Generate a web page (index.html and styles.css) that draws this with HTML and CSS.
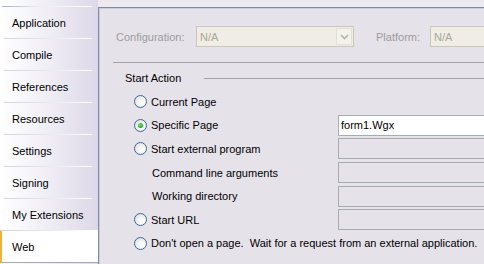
FILE: index.html
```html
<!DOCTYPE html>
<html lang="en">
<head>
  <meta charset="UTF-8" />
  <title>Project Properties - Web</title>
  <link rel="stylesheet" href="styles.css">
</head>
<body>
  <div class="window">
    <ul class="tabs">
      <li class="tab">Application</li>
      <li class="tab">Compile</li>
      <li class="tab">References</li>
      <li class="tab">Resources</li>
      <li class="tab">Settings</li>
      <li class="tab">Signing</li>
      <li class="tab">My Extensions</li>
      <li class="tab active">Web</li>
    </ul>

    <div class="panel-wrap">
      <div class="panel">
        <div class="config-row">
          <span class="dim config-label">Configuration:</span>
          <div class="combo">
            <span class="combo-text">N/A</span>
            <span class="combo-btn">
              <svg width="9" height="6" viewBox="0 0 9 6">
                <path d="M1 1 L4.5 4.5 L8 1" fill="none" stroke="#b4b3a8" stroke-width="1.6" />
              </svg>
            </span>
          </div>
          <span class="dim platform-label">Platform:</span>
          <div class="combo platform">
            <span class="combo-text">N/A</span>
          </div>
        </div>

        <div class="rule"></div>

        <div class="group-title">
          <span>Start Action</span>
          <span class="group-line"></span>
        </div>

        <div class="options">
          <span class="radio"></span>
          <span class="opt-label">Current Page</span>
          <span></span>

          <span class="radio checked"></span>
          <span class="opt-label">Specific Page</span>
          <div class="field active">form1.Wgx</div>

          <span class="radio"></span>
          <span class="opt-label">Start external program</span>
          <div class="field"></div>

          <span></span>
          <span class="opt-label sub">Command line arguments</span>
          <div class="field"></div>

          <span></span>
          <span class="opt-label sub">Working directory</span>
          <div class="field"></div>

          <span class="radio"></span>
          <span class="opt-label">Start URL</span>
          <div class="field"></div>

          <span class="radio"></span>
          <span class="opt-label wide">Don't open a page.&nbsp; Wait for a request from an external application.</span>
        </div>
      </div>
    </div>
  </div>
</body>
</html>
```

FILE: styles.css
```css
html, body {
  margin: 0;
  padding: 0;
}
body {
  font-family: "Liberation Sans", Arial, sans-serif;
  font-size: 11px;
  color: #000;
  width: 484px;
  height: 264px;
  overflow: hidden;
  background: #fff;
}
.window {
  display: flex;
  height: 264px;
}

/* left tab strip */
.tabs {
  list-style: none;
  margin: 0;
  padding: 6px 0 0 0;
  width: 98px;
  flex-shrink: 0;
  background: linear-gradient(to right, #ffffff 0%, #f1eff6 45%, #dcd8e8 100%);
}
.tab {
  position: relative;
  height: 31px;
  line-height: 33px;
  padding-left: 12px;
  border-top: 1px solid transparent;
}
.tab::before {
  content: "";
  position: absolute;
  left: 4px;
  right: 6px;
  top: -1px;
  height: 1px;
  background: linear-gradient(to right, #cfd3dc, #ffffff);
}
.tab:first-child::before {
  left: 2px;
  right: 6px;
  background: linear-gradient(to right, #9fb0c4, #e8ecf2 40%, #ffffff);
  border-top-left-radius: 3px;
}
.tab.active {
  background: #fff;
  border-left: 2px solid #efb041;
  padding-left: 10px;
  border-bottom: 1px solid #a9a9b0;
  height: 31px;
}
.tab.active::before {
  left: 0;
  right: 6px;
}

/* right panel */
.panel-wrap {
  flex: 1;
  padding-top: 7px;
  background: #ece9f1;
  overflow: hidden;
}
.panel {
  height: 100%;
  background: #e6e2ea;
  border-top: 1px solid #7d8da3;
  border-left: 1px solid #7d8da3;
  box-shadow: inset 1px 1px 0 #c9cdd8;
  padding: 18px 0 0 17px;
  box-sizing: border-box;
  overflow: hidden;
}

.config-row {
  display: flex;
  align-items: center;
  height: 21px;
}
.config-row > * {
  flex-shrink: 0;
}
.dim {
  color: #9c9c9c;
}
.config-label {
  width: 80px;
}
.combo {
  display: flex;
  align-items: center;
  width: 156px;
  height: 19px;
  border: 1px solid #c9c7ba;
  background: #efede6;
  color: #aaa793;
  box-sizing: content-box;
}
.combo-text {
  flex: 1;
  padding-left: 3px;
}
.combo-btn {
  width: 16px;
  height: 17px;
  margin-right: 1px;
  display: flex;
  align-items: center;
  justify-content: center;
  background: #f3f2ec;
  border: 1px solid #e0dfd6;
  box-sizing: border-box;
}
.platform-label {
  margin-left: 22px;
  width: 54px;
}
.combo.platform {
  width: 70px;
}

.rule {
  height: 1px;
  background: #a3a2a8;
  margin: 15px 0 0 -3px;
}

.group-title {
  display: flex;
  align-items: center;
  margin: 7px 0 0 9px;
  height: 16px;
}
.group-line {
  flex: 1;
  height: 1px;
  background: #a3a2a8;
  margin-left: 23px;
}

.options {
  display: grid;
  grid-template-columns: 17px 187px 160px;
  grid-auto-rows: 23.6px;
  align-items: center;
  margin: 4px 0 0 18px;
}
.radio {
  width: 11px;
  height: 11px;
  border: 1px solid #3b6a98;
  border-radius: 50%;
  background: radial-gradient(circle at 65% 65%, #ffffff 0%, #f4f4f2 40%, #d6d5cf 100%);
  position: relative;
}
.radio.checked::after {
  content: "";
  position: absolute;
  left: 3px;
  top: 3px;
  width: 5px;
  height: 5px;
  border-radius: 50%;
  background: radial-gradient(circle at 40% 40%, #7ee27e, #21a121 70%);
}
.opt-label {
  white-space: nowrap;
}
.opt-label.sub {
  padding-left: 1px;
}
.opt-label.wide {
  grid-column: 2 / 4;
}
.field {
  height: 19px;
  line-height: 19px;
  border: 1px solid #a6acb3;
  padding-left: 2px;
  background: transparent;
}
.field.active {
  background: #fff;
}
```
